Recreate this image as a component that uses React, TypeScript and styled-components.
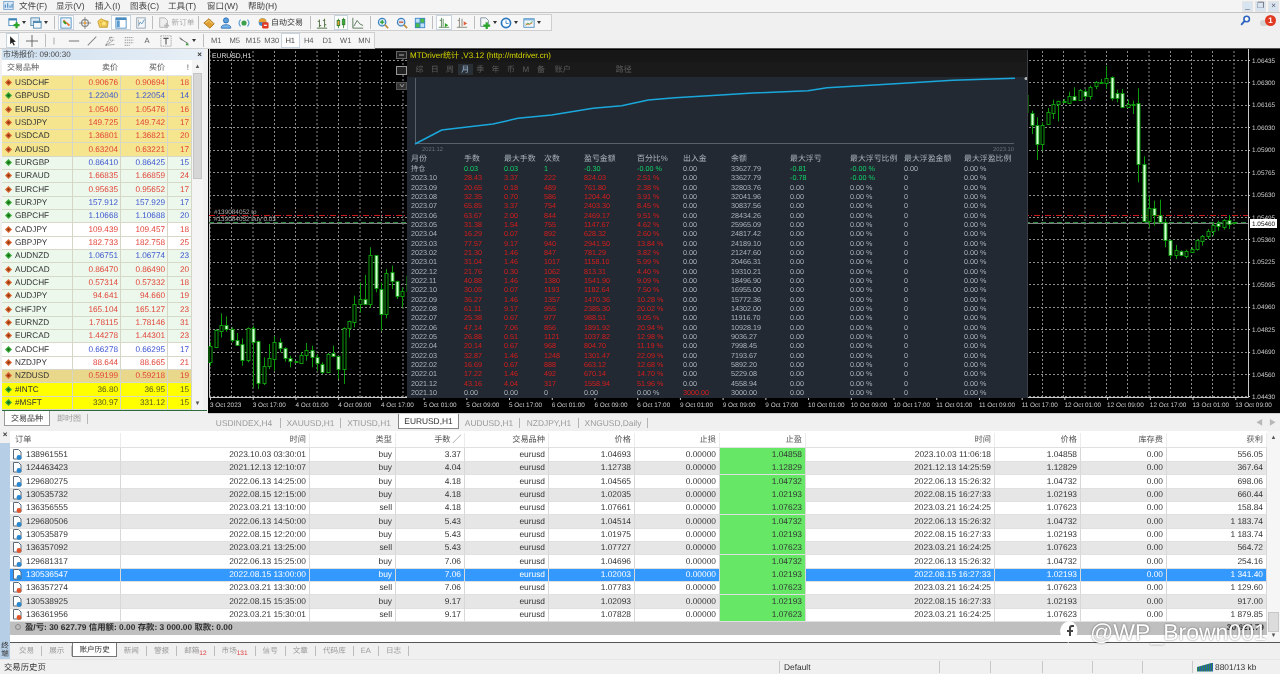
import React from "react";
import styled, { createGlobalStyle } from "styled-components";

const GlobalStyle = createGlobalStyle`
  html, body { margin: 0; padding: 0; background: #f0f0f0; }
  body {
    font-family: "Liberation Sans", "Noto Sans CJK SC", sans-serif;
    font-size: 8.4px;
    color: #2f2f2f;
    text-rendering: geometricPrecision;
  }
`;

const Frame = styled.div`
  position: relative;
  display: flex;
  flex-direction: column;
  width: 1280px;
  height: 674px;
  overflow: hidden;
  background: #f0f0f0;
  filter: blur(0.3px);
`;

/* ---------- menu + toolbars ---------- */

const MenuBar = styled.div`
  display: flex;
  align-items: center;
  height: 13px;
  box-sizing: border-box;
  border-bottom: 1px solid #c4c4c4;
  background: #f4f4f4;
  padding-left: 3px;
`;

const MenuItem = styled.span<{ $w: number }>`
  width: ${(p) => p.$w}px;
  font-size: 8.6px;
  color: #444;
`;

const WinButtons = styled.div`
  display: flex;
  margin-left: auto;
  gap: 2px;
  padding-right: 1px;
`;

const WinButton = styled.div`
  display: flex;
  align-items: center;
  justify-content: center;
  width: 11px;
  height: 11px;
  background: #d8e4f0;
  border: 1px solid #e4e4e4;
  box-sizing: border-box;
  color: #556;
  font-size: 8px;
  line-height: 1;
`;

const ToolArea = styled.div`
  position: relative;
  display: flex;
  flex-direction: column;
  height: 36px;
  box-sizing: border-box;
  border-bottom: 1px solid #505050;
`;

const ToolRow = styled.div<{ $w: number; $mt: number }>`
  display: flex;
  align-items: center;
  width: ${(p) => p.$w}px;
  height: 17px;
  margin-top: ${(p) => p.$mt}px;
  box-sizing: border-box;
  background: #f6f6f6;
  border: 1px solid #cfcfcf;
  border-left: 0;
  padding-left: 6px;
`;

const ToolBtn = styled.div<{ $w: number; $ml?: number; $on?: boolean }>`
  display: flex;
  align-items: center;
  justify-content: center;
  gap: 2px;
  flex: none;
  width: ${(p) => p.$w}px;
  height: 15px;
  margin-left: ${(p) => p.$ml ?? 0}px;
  box-sizing: border-box;
  font-size: 7.6px;
  color: ${(p) => (p.$on ? "#444" : "#5a5a5a")};
  background: ${(p) => (p.$on ? "#fff" : "transparent")};
  border: 1px solid ${(p) => (p.$on ? "#c8d4e0" : "transparent")};
`;

const GreyLabel = styled.span`
  color: #a9a9a9;
  font-size: 7.6px;
`;

const AutoLabel = styled.span`
  color: #333;
  font-size: 8px;
`;

const ToolSep = styled.div<{ $w: number }>`
  flex: none;
  width: ${(p) => p.$w}px;
  height: 13px;
  background: linear-gradient(#bdbdbd, #bdbdbd) center / 1px 100% no-repeat;
`;

const Caret = styled.span`
  width: 0;
  height: 0;
  border-left: 2px solid transparent;
  border-right: 2px solid transparent;
  border-top: 3px solid #333;
`;

const TopRight = styled.div`
  position: absolute;
  top: 0;
  right: 4px;
  height: 15px;
  display: flex;
  align-items: center;
`;

const Bubble = styled.span`
  width: 8px;
  height: 6px;
  margin: 5px -3px 0 9px;
  border-radius: 3px;
  background: #d4d4d4;
`;

const Badge = styled.span`
  position: relative;
  display: flex;
  align-items: center;
  justify-content: center;
  width: 11px;
  height: 11px;
  border-radius: 50%;
  background: #e23a22;
  color: #fff;
  font-size: 8px;
  font-weight: 700;
`;

type IconProps = { children: React.ReactNode; size?: number };
const Ico = ({ children, size = 12 }: IconProps) => (
  <svg width={size} height={size} viewBox="0 0 14 14">
    {children}
  </svg>
);

const icons: Record<string, React.ReactNode> = {
  newChart: (
    <>
      <rect x="1" y="2" width="9" height="8" fill="#fff" stroke="#3f86b8" />
      <rect x="1" y="2" width="9" height="2" fill="#3f86b8" />
      <path d="M10 6v7M6.5 9.5h7" stroke="#2aa52a" strokeWidth="2.6" />
    </>
  ),
  profile: (
    <>
      <rect x="1" y="1" width="10" height="9" fill="#dce8f2" stroke="#4d87b0" />
      <rect x="4" y="5" width="9" height="8" fill="#f4f8fb" stroke="#4d87b0" />
      <rect x="4" y="5" width="9" height="2" fill="#4d87b0" />
    </>
  ),
  market: (
    <>
      <rect x="1" y="1" width="12" height="12" fill="#eaf3fa" stroke="#4a8bbf" />
      <path d="M4 4l3 3-2 0M8 7l3 3" stroke="#e86a1c" strokeWidth="2" fill="none" />
      <path d="M4 5l3 3" stroke="#2aa52a" strokeWidth="2" />
    </>
  ),
  data: (
    <>
      <circle cx="7" cy="7" r="4" fill="none" stroke="#8a8a8a" strokeWidth="1.4" />
      <path d="M7 0v14M0 7h14" stroke="#777" />
      <circle cx="7" cy="7" r="1.4" fill="#f0a030" />
    </>
  ),
  nav: (
    <>
      <path d="M1 5l4-3 3 2 5 1-1 7H3z" fill="#f5cf5a" stroke="#c09a30" />
      <path d="M8 3l1.5 3 3 .3-2.2 2 .6 3L8 9.8 5.2 11.3l.6-3-2.2-2 3-.3z" fill="#ffe680" stroke="#c89a20" strokeWidth=".6" />
    </>
  ),
  term: (
    <>
      <rect x="1" y="1" width="12" height="12" fill="#fff" stroke="#4a8bbf" />
      <rect x="1" y="1" width="12" height="2.5" fill="#4a8bbf" />
      <rect x="2" y="4" width="3.5" height="8" fill="#5a9bd0" />
    </>
  ),
  tester: (
    <>
      <rect x="2" y="1" width="10" height="12" fill="#f4f6f8" stroke="#8fa0b0" />
      <path d="M4 10l2-4 2 2 3-5" stroke="#4a8bbf" fill="none" />
      <path d="M4 3v8" stroke="#b0b0b0" />
    </>
  ),
  order: (
    <>
      <path d="M2 1h6l3 3v8H2z" fill="#eee" stroke="#b0b0b0" />
      <path d="M10 7v6M7 10h6" stroke="#b8b8b8" strokeWidth="2" />
    </>
  ),
  editor: (
    <>
      <path d="M1 7l6-5 6 6-5 5z" fill="#e0a030" stroke="#a87018" />
      <path d="M3 7l4-3 4 4" stroke="#f6dc90" fill="none" />
    </>
  ),
  person: (
    <>
      <circle cx="7" cy="4" r="3" fill="#5aa0e0" stroke="#2a6ab0" />
      <path d="M1.5 12c0-4 11-4 11 0v1h-11z" fill="#7ab8ec" stroke="#2a6ab0" />
    </>
  ),
  globe: (
    <>
      <circle cx="7" cy="7" r="3" fill="#3aa04a" />
      <path d="M3 3a6 6 0 000 8M11 3a6 6 0 010 8" stroke="#5a9ad0" fill="none" strokeWidth="1.3" />
    </>
  ),
  auto: (
    <>
      <circle cx="6.5" cy="6" r="4.5" fill="#3c8ad0" />
      <path d="M2 6a4.5 4.5 0 019 0z" fill="#e8a030" />
      <rect x="6" y="6" width="7.5" height="7.5" rx="1.5" fill="#e03a22" />
      <rect x="8" y="9" width="3.5" height="1.4" fill="#fff" />
    </>
  ),
  bars: <path d="M4 3v9M2 5h2M4 10h2M10 2v10M8 4h2M10 9h2M1 13h12" stroke="#4f6f3f" strokeWidth="1.1" fill="none" />,
  candles: (
    <>
      <path d="M4 2v11M10 1v12" stroke="#2d7f2d" />
      <rect x="2.5" y="4" width="3" height="6" fill="#e8a030" stroke="#2d7f2d" />
      <rect x="8.5" y="3" width="3" height="6" fill="#38b038" stroke="#2d7f2d" />
    </>
  ),
  line: <path d="M1 1v12h12M2 11l4-7 3 4 4 2" stroke="#5a7a5a" strokeWidth="1.1" fill="none" />,
  zoomIn: (
    <>
      <circle cx="6" cy="6" r="4.3" fill="#d6eafa" stroke="#3a80c0" strokeWidth="1.4" />
      <path d="M9 9l4 4" stroke="#c09040" strokeWidth="2" />
      <path d="M6 3.5v5M3.5 6h5" stroke="#2a9a2a" strokeWidth="1.4" />
    </>
  ),
  zoomOut: (
    <>
      <circle cx="6" cy="6" r="4.3" fill="#d6eafa" stroke="#3a80c0" strokeWidth="1.4" />
      <path d="M9 9l4 4" stroke="#c09040" strokeWidth="2" />
      <path d="M3.5 6h5" stroke="#d04020" strokeWidth="1.4" />
    </>
  ),
  tile: (
    <>
      <rect x="1" y="1" width="12" height="12" fill="#3a86c8" />
      <rect x="2" y="2" width="4.5" height="4.5" fill="#bfe0f6" />
      <rect x="7.5" y="2" width="4.5" height="4.5" fill="#4aba4a" />
      <rect x="2" y="7.5" width="4.5" height="4.5" fill="#4aba4a" />
      <rect x="7.5" y="7.5" width="4.5" height="4.5" fill="#bfe0f6" />
    </>
  ),
  scroll: (
    <>
      <path d="M4 1v11M1 12h12M2 4h2M6 2v9" stroke="#4f7f4f" fill="none" />
      <path d="M8 7l4 2.5-4 2.5z" fill="#2aa52a" />
    </>
  ),
  shift: (
    <>
      <path d="M4 1v11M1 12h12M2 4h2M7 2v9" stroke="#7f7f6f" fill="none" />
      <path d="M9 5l4 2.5-4 2.5z" fill="#e0603a" />
    </>
  ),
  indicator: (
    <>
      <path d="M2 1h6l3 3v7H2z" fill="#f4f6f8" stroke="#7a8a9a" />
      <path d="M9 6v8M5 10h8" stroke="#2aa52a" strokeWidth="2.6" />
    </>
  ),
  clock: (
    <>
      <circle cx="7" cy="7" r="5.3" fill="#fff" stroke="#2a78c0" strokeWidth="2" />
      <path d="M7 4v3.5h3" stroke="#2a78c0" fill="none" />
    </>
  ),
  template: (
    <>
      <rect x="1" y="2" width="12" height="10" fill="#eef5fb" stroke="#4a8bbf" />
      <rect x="1" y="2" width="12" height="2" fill="#7fb2da" />
      <path d="M3 10l2.5-3 2 1.5L11 5" stroke="#3aa03a" fill="none" />
      <path d="M3 8l3 1 5-2" stroke="#d8803a" fill="none" />
    </>
  ),
  cursor: <path d="M4 1l0 10 2.5-2.2 2 4 1.5-.8-2-3.8 3.3-.2z" fill="#222" />,
  cross: <path d="M7 0v14M0 7h14" stroke="#555" />,
  vline: <path d="M7 1v12" stroke="#888" strokeWidth="1.2" />,
  hline: <path d="M1 7h12" stroke="#777" strokeWidth="1.2" />,
  trend: <path d="M2 12L12 2" stroke="#888" strokeWidth="1.2" />,
  fan: <path d="M2 12L8 2M2 12l8-5M2 12l10-1M6 3h5M7 6h5" stroke="#777" strokeDasharray="1.5 .7" fill="none" />,
  lines: <path d="M2 3h10M2 6h10M2 9h10M2 12h6" stroke="#888" strokeDasharray="1.5 .8" fill="none" />,
  labelBox: (
    <>
      <path d="M1 1h12M1 13h12M1 1v12M13 1v12" stroke="#999" strokeDasharray="1.5 1" fill="none" />
      <path d="M4 4h6M7 4v7" stroke="#555" strokeWidth="1.3" />
    </>
  ),
  arrows: (
    <>
      <path d="M1 3l5 3-2 0z" fill="#555" />
      <path d="M2 3l5 4M7 7l5 3" stroke="#666" />
      <path d="M10 9l3 3-4 0z" fill="#3a9a3a" />
    </>
  ),
  search: (
    <>
      <circle cx="8.5" cy="5" r="3.5" fill="#fff" stroke="#2a62c0" strokeWidth="2" />
      <path d="M6 7.5L1.5 12.5" stroke="#2a62c0" strokeWidth="2.4" />
    </>
  ),
  logo: (
    <>
      <rect x="1" y="2" width="12" height="10" fill="#d8e8f6" stroke="#6a9ac8" />
      <path d="M3 10V6M6 10V4M9 10V7M11.5 10V5" stroke="#4a86c0" strokeWidth="1.4" />
    </>
  ),
};

const I = ({ n, size }: { n: string; size?: number }) => <Ico size={size}>{icons[n]}</Ico>;

const Toolbars = () => (
  <ToolArea>
    <ToolRow $w={552} $mt={1}>
      <ToolBtn $w={21}><I n="newChart" /><Caret /></ToolBtn>
      <ToolBtn $w={24}><I n="profile" /><Caret /></ToolBtn>
      <ToolSep $w={7} />
      <ToolBtn $w={16} $on><I n="market" /></ToolBtn>
      <ToolBtn $w={21}><I n="data" /></ToolBtn>
      <ToolBtn $w={16}><I n="nav" /></ToolBtn>
      <ToolBtn $w={20} $on><I n="term" /></ToolBtn>
      <ToolBtn $w={19}><I n="tester" /></ToolBtn>
      <ToolSep $w={5} />
      <ToolBtn $w={42}><I n="order" /><GreyLabel>新订单</GreyLabel></ToolBtn>
      <ToolSep $w={3} />
      <ToolBtn $w={17}><I n="editor" /></ToolBtn>
      <ToolBtn $w={18}><I n="person" /></ToolBtn>
      <ToolBtn $w={18}><I n="globe" /></ToolBtn>
      <ToolBtn $w={54}><I n="auto" /><AutoLabel>自动交易</AutoLabel></ToolBtn>
      <ToolSep $w={6} />
      <ToolBtn $w={17}><I n="bars" /></ToolBtn>
      <ToolBtn $w={14} $ml={4} $on><I n="candles" /></ToolBtn>
      <ToolBtn $w={20}><I n="line" /></ToolBtn>
      <ToolSep $w={5} />
      <ToolBtn $w={20}><I n="zoomIn" /></ToolBtn>
      <ToolBtn $w={18}><I n="zoomOut" /></ToolBtn>
      <ToolBtn $w={17}><I n="tile" /></ToolBtn>
      <ToolSep $w={8} />
      <ToolBtn $w={16} $on><I n="scroll" /></ToolBtn>
      <ToolBtn $w={20}><I n="shift" /></ToolBtn>
      <ToolSep $w={5} />
      <ToolBtn $w={21}><I n="indicator" /><Caret /></ToolBtn>
      <ToolBtn $w={22}><I n="clock" /><Caret /></ToolBtn>
      <ToolBtn $w={24}><I n="template" /><Caret /></ToolBtn>
    </ToolRow>
    <ToolRow $w={375} $mt={1}>
      <ToolBtn $w={13} $on><I n="cursor" /></ToolBtn>
      <ToolBtn $w={20} $ml={3}><I n="cross" /></ToolBtn>
      <ToolSep $w={7} />
      <ToolBtn $w={10}><I n="vline" /></ToolBtn>
      <ToolBtn $w={20} $ml={5}><I n="hline" /></ToolBtn>
      <ToolBtn $w={16}><I n="trend" /></ToolBtn>
      <ToolBtn $w={20}><I n="fan" /></ToolBtn>
      <ToolBtn $w={17}><I n="lines" /></ToolBtn>
      <ToolBtn $w={20}>A</ToolBtn>
      <ToolBtn $w={17}><I n="labelBox" /></ToolBtn>
      <ToolBtn $w={26}><I n="arrows" /><Caret /></ToolBtn>
      <ToolSep $w={7} />
      {["M1", "M5", "M15", "M30", "H1", "H4", "D1", "W1", "MN"].map((t) => (
        <ToolBtn key={t} $w={18.5} $on={t === "H1"}>{t}</ToolBtn>
      ))}
    </ToolRow>
    <TopRight>
      <I n="search" size={11} />
      <Bubble />
      <Badge>1</Badge>
    </TopRight>
  </ToolArea>
);

/* ---------- market watch ---------- */

const Workspace = styled.div`
  display: flex;
  height: 382px;
  flex: none;
`;

const MarketPanel = styled.div`
  display: flex;
  flex-direction: column;
  width: 207px;
  flex: none;
  background: #f0f0f0;
`;

const PanelTitle = styled.div`
  display: flex;
  align-items: center;
  justify-content: space-between;
  height: 11px;
  margin: 0 3px 0 2px;
  padding: 0 2px 0 1px;
  background: linear-gradient(90deg, #cfe0f0, #e8eff6);
  font-size: 8px;
  color: #444;
`;

const Close = styled.span`
  font-size: 8px;
  font-weight: 700;
  color: #333;
`;

const MarketBody = styled.div`
  display: flex;
  flex: none;
  height: 350px;
  margin-left: 2px;
  border-bottom: 1px solid #2e6b3e;
`;

const MarketTable = styled.div`
  width: 190px;
  flex: none;
`;

const MarketColumns = "71px 48px 47px 24px";

const MarketHead = styled.div`
  display: grid;
  grid-template-columns: ${MarketColumns};
  height: 16px;
  background: #fff;
  align-items: center;
  color: #555;
  font-size: 8px;
  border-bottom: 1px solid #e4e4e4;
  box-sizing: border-box;
`;

const HeadName = styled.span`
  padding-left: 5px;
`;

const HeadNum = styled.span`
  text-align: right;
  padding-right: 3px;
`;

const bgs: Record<string, string> = {
  y: "#f4e58e",
  m: "#ecf8ec",
  w: "#ffffff",
  t: "#e9d78c",
  Y: "#ffff00",
};

const MarketRow = styled.div<{ $bg: string }>`
  display: grid;
  grid-template-columns: ${MarketColumns};
  height: 13.333px;
  align-items: stretch;
  background: ${(p) => bgs[p.$bg]};
  font-size: 8.2px;
  line-height: 13px;
`;

const SymbolCell = styled.span`
  display: flex;
  align-items: center;
  gap: 3px;
  padding-left: 3px;
  color: #333;
  border-right: 1px solid #d6d6c8;
  border-bottom: 1px solid #d8d8c8;
  box-sizing: border-box;
`;

const priceColors: Record<string, string> = { r: "#e2453a", b: "#3f57d0", k: "#5a5a20" };

const PriceCell = styled.span<{ $c: string }>`
  text-align: right;
  padding-right: 2px;
  color: ${(p) => priceColors[p.$c]};
  border-right: 1px solid #d6d6c8;
  border-bottom: 1px solid #d8d8c8;
  box-sizing: border-box;
`;

const VScroll = styled.div`
  display: flex;
  flex-direction: column;
  justify-content: space-between;
  align-items: center;
  width: 11px;
  flex: none;
  background: #f4f4f4;
  color: #555;
  font-size: 6px;
  padding: 4px 0 3px;
  box-sizing: border-box;
`;

const MarketThumb = styled.div`
  width: 9px;
  height: 106px;
  margin: 3px 0 auto;
  background: #d6d6d6;
  border: 1px solid #c4c4c4;
  box-sizing: border-box;
`;

const PanelTabs = styled.div`
  display: flex;
  align-items: center;
  height: 15px;
  margin-left: 4px;
  font-size: 8px;
  color: #9c9c9c;
`;

const ActivePanelTab = styled.div`
  display: flex;
  align-items: center;
  justify-content: center;
  width: 46px;
  height: 15px;
  background: #fff;
  color: #333;
  border: 1px solid #9a9a9a;
  border-top: 0;
  box-sizing: border-box;
`;

const PanelTab = styled.div`
  padding: 0 6px 0 7px;
  border-right: 1px solid #b8b8b8;
  line-height: 10px;
`;

const marketData: [string, string, string, string, "r" | "b" | "k", string][] = [
  ["USDCHF", "0.90676", "0.90694", "18", "r", "y"],
  ["GBPUSD", "1.22040", "1.22054", "14", "b", "y"],
  ["EURUSD", "1.05460", "1.05476", "16", "r", "y"],
  ["USDJPY", "149.725", "149.742", "17", "r", "y"],
  ["USDCAD", "1.36801", "1.36821", "20", "r", "y"],
  ["AUDUSD", "0.63204", "0.63221", "17", "r", "y"],
  ["EURGBP", "0.86410", "0.86425", "15", "b", "m"],
  ["EURAUD", "1.66835", "1.66859", "24", "r", "m"],
  ["EURCHF", "0.95635", "0.95652", "17", "r", "m"],
  ["EURJPY", "157.912", "157.929", "17", "b", "m"],
  ["GBPCHF", "1.10668", "1.10688", "20", "b", "m"],
  ["CADJPY", "109.439", "109.457", "18", "r", "w"],
  ["GBPJPY", "182.733", "182.758", "25", "r", "w"],
  ["AUDNZD", "1.06751", "1.06774", "23", "b", "m"],
  ["AUDCAD", "0.86470", "0.86490", "20", "r", "m"],
  ["AUDCHF", "0.57314", "0.57332", "18", "r", "m"],
  ["AUDJPY", "94.641", "94.660", "19", "r", "m"],
  ["CHFJPY", "165.104", "165.127", "23", "r", "m"],
  ["EURNZD", "1.78115", "1.78146", "31", "r", "m"],
  ["EURCAD", "1.44278", "1.44301", "23", "r", "m"],
  ["CADCHF", "0.66278", "0.66295", "17", "b", "w"],
  ["NZDJPY", "88.644", "88.665", "21", "r", "w"],
  ["NZDUSD", "0.59199", "0.59218", "19", "r", "t"],
  ["#INTC", "36.80", "36.95", "15", "k", "Y"],
  ["#MSFT", "330.97", "331.12", "15", "k", "Y"],
];

const Tick = ({ up }: { up: boolean }) => (
  <svg width="7" height="7" viewBox="0 0 7 7">
    <path d="M3.5 0L7 3.5 3.5 7 0 3.5z" fill={up ? "#3aa53a" : "#d8622e"} />
    <circle cx="3.5" cy="3.5" r="1.2" fill={up ? "#0f6a0f" : "#8a3410"} />
  </svg>
);

const MarketWatch = () => (
  <MarketPanel>
    <PanelTitle>
      <span>市场报价: 09:00:30</span>
      <Close>×</Close>
    </PanelTitle>
    <MarketBody>
      <MarketTable>
        <MarketHead>
          <HeadName>交易品种</HeadName>
          <HeadNum>卖价</HeadNum>
          <HeadNum>买价</HeadNum>
          <HeadNum>!</HeadNum>
        </MarketHead>
        {marketData.map(([s, bid, ask, sp, c, bg]) => (
          <MarketRow key={s} $bg={bg}>
            <SymbolCell>
              <Tick up={c !== "r"} />
              {s}
            </SymbolCell>
            <PriceCell $c={c}>{bid}</PriceCell>
            <PriceCell $c={c}>{ask}</PriceCell>
            <PriceCell $c={c}>{sp}</PriceCell>
          </MarketRow>
        ))}
      </MarketTable>
      <VScroll>
        <span>▲</span>
        <MarketThumb />
        <span>▼</span>
      </VScroll>
    </MarketBody>
    <PanelTabs>
      <ActivePanelTab>交易品种</ActivePanelTab>
      <PanelTab>即时图</PanelTab>
    </PanelTabs>
  </MarketPanel>
);

/* ---------- candlestick chart ---------- */

const ChartPane = styled.div`
  display: flex;
  flex-direction: column;
  flex: 1;
  min-width: 0;
  margin-left: 1px;
`;

const ChartCanvas = styled.div`
  position: relative;
  flex: none;
  width: 1072px;
  height: 364px;
  background: #000;
  svg { display: block; }
`;

type Candle = [number, number, number, number, number];

// wick top, body top, body bottom, wick bottom, filled (1 = down candle)
const leftCandles: Candle[] = [
  [430, 440, 488, 500, 0], [390, 393, 443, 445, 0], [343, 378, 395, 415, 0], [352, 378, 390, 398, 1],
  [385, 390, 422, 430, 1], [402, 422, 436, 440, 1], [418, 436, 484, 500, 1], [385, 388, 484, 490, 0],
  [380, 388, 430, 565, 1], [425, 427, 552, 570, 1], [475, 502, 552, 558, 0], [435, 478, 502, 510, 0],
  [412, 428, 478, 515, 0], [418, 430, 448, 460, 1], [445, 447, 478, 488, 1], [470, 478, 486, 505, 1],
  [486, 486, 490, 490, 0], [460, 467, 492, 495, 0], [432, 452, 468, 485, 0], [440, 452, 472, 505, 1],
  [465, 475, 494, 515, 1], [490, 494, 518, 525, 1], [462, 464, 518, 520, 0], [440, 463, 472, 475, 1],
  [470, 472, 510, 540, 1], [385, 388, 512, 555, 0], [365, 367, 388, 415, 0], [290, 315, 370, 385, 0],
  [250, 300, 315, 340, 0], [228, 300, 316, 318, 1], [145, 168, 316, 325, 0], [168, 168, 268, 280, 1],
  [250, 270, 344, 395, 1], [210, 222, 345, 358, 0], [200, 220, 246, 270, 1], [245, 246, 292, 300, 1],
  [265, 277, 293, 325, 0], [230, 232, 278, 280, 0],
];

const rightCandles: Candle[] = [
  [105, 108, 160, 165, 0], [155, 163, 198, 225, 1], [175, 198, 255, 303, 1], [190, 198, 255, 275, 0],
  [147, 160, 196, 198, 0], [122, 134, 162, 180, 0], [125, 127, 136, 187, 0], [120, 126, 130, 132, 0],
  [98, 110, 130, 132, 0], [85, 110, 122, 125, 1], [90, 92, 123, 125, 0], [90, 95, 110, 120, 1],
  [80, 83, 110, 122, 0], [66, 70, 83, 90, 0], [60, 68, 72, 72, 0], [20, 56, 70, 90, 0],
  [52, 54, 118, 125, 1], [92, 102, 118, 130, 1], [90, 102, 143, 145, 1], [122, 134, 143, 145, 0],
  [125, 134, 136, 165, 0], [88, 133, 315, 370, 1], [292, 315, 485, 490, 1], [410, 448, 486, 505, 0],
  [425, 448, 468, 500, 1], [422, 468, 490, 495, 1], [480, 490, 543, 565, 1], [542, 544, 588, 598, 1],
  [558, 574, 590, 600, 0], [574, 575, 588, 592, 1], [572, 575, 590, 598, 0], [565, 570, 578, 580, 0],
  [540, 544, 572, 575, 0], [528, 530, 544, 560, 0], [510, 516, 530, 540, 0], [490, 497, 516, 530, 0],
  [485, 493, 503, 515, 1], [480, 482, 502, 512, 0], [468, 482, 494, 510, 1], [489, 490, 492, 493, 0],
];

const xGrid = [210, 231.5, 253, 274.5, 295.5, 317, 338.5, 360, 381.5, 403, 1042.5, 1063.5, 1085, 1106.5, 1127.5, 1149, 1170.5, 1191.5, 1212.5, 1234];
const prices = ["1.06435", "1.06300", "1.06165", "1.06030", "1.05900", "1.05765", "1.05630", "1.05495", "1.05360", "1.05225", "1.05095", "1.04960", "1.04825", "1.04690", "1.04560", "1.04430"];
const times = [
  "3 Oct 2023", "3 Oct 17:00", "4 Oct 01:00", "4 Oct 09:00", "4 Oct 17:00", "5 Oct 01:00", "5 Oct 09:00", "5 Oct 17:00",
  "6 Oct 01:00", "6 Oct 09:00", "6 Oct 17:00", "9 Oct 01:00", "9 Oct 09:00", "9 Oct 17:00", "10 Oct 01:00", "10 Oct 09:00",
  "10 Oct 17:00", "11 Oct 01:00", "11 Oct 09:00", "11 Oct 17:00", "12 Oct 01:00", "12 Oct 09:00", "12 Oct 17:00", "13 Oct 01:00", "13 Oct 09:00",
];
const priceY = (i: number) => 61 + i * 22.43;

const CandleShape = ({ x, c, y }: { x: number; c: Candle; y: (v: number) => number }) => {
  const [wt, bt, bb, wb, down] = c;
  const rx = Math.round(x);
  return (
    <g>
      <path d={`M${rx + 0.5} ${y(wt)}V${y(wb)}`} stroke="#0a9a0a" />
      <rect
        x={rx - 1}
        y={Math.round(y(bt)) + 0.5}
        width={3}
        height={Math.max(1, Math.round(y(bb) - y(bt)))}
        fill={down ? "#d4ffd4" : "#000"}
        stroke="#0c9c0c"
      />
    </g>
  );
};

const chartFont = '"Liberation Sans", sans-serif';
const axisText = { fill: "#c9c9c9", fontSize: 6.4, fontFamily: chartFont };
const noteText = { fill: "#a8a8a8", fontSize: 6.4, fontFamily: chartFont };

const CandleChart = () => (
  <svg width={1072} height={364} viewBox="208 50 1072 364">
    {xGrid.map((x) => (
      <path key={x} d={`M${x} 52V398`} stroke="#8c8c8c" strokeDasharray="2 2" />
    ))}
    {prices.map((p, i) => (
      <path key={p} d={`M209 ${Math.round(priceY(i)) + 0.5}H1248`} stroke="#8c8c8c" strokeDasharray="2 2" />
    ))}
    <path d="M209.5 50V398.5H1248.5V50" stroke="#c8c8c8" fill="none" />
    {prices.map((p, i) => (
      <g key={p}>
        <path d={`M1248 ${Math.round(priceY(i)) + 0.5}h2`} stroke="#c8c8c8" />
        <text x={1252} y={priceY(i) + 2.5} {...axisText}>{p}</text>
      </g>
    ))}
    {times.map((t, i) => (
      <g key={t}>
        <path d={`M${210.5 + i * 42.72} 398v3`} stroke="#c8c8c8" />
        <text x={210 + i * 42.72} y={407.5} {...axisText}>{t}</text>
      </g>
    ))}
    <path d="M209 216.5H1248" stroke="#c81818" strokeDasharray="6 2 1 2" />
    <path d="M209 223.5H1248" stroke="#2e8a3e" strokeDasharray="5 3" />
    <path d="M209 224.5H1248" stroke="#808080" />
    <text x={214} y={215} {...noteText}>#139084052 tp</text>
    <text x={214} y={222} {...noteText}>#139084052 buy 0.03</text>
    {leftCandles.map((c, i) => (
      <CandleShape key={i} x={210.3 + i * 5.33} c={c} y={(v) => 200 + v / 3} />
    ))}
    {rightCandles.map((c, i) => (
      <CandleShape key={i} x={1026.3 + i * 5.33} c={c} y={(v) => 60 + v / 3} />
    ))}
    <rect x={1250} y={220} width={27} height={9} fill="#fff" />
    <text x={1252} y={227} fontSize={6.4} fill="#111" fontFamily={chartFont}>1.05460</text>
    <rect x={396.5} y={52.5} width={10} height={7} fill="#222" stroke="#666" />
    <path d="M399 56h5" stroke="#aaa" />
    <rect x={396.5} y={67.5} width={10} height={8} fill="#222" stroke="#999" />
    <rect x={396.5} y={83.5} width={10} height={7} fill="#333" stroke="#555" />
    <path d="M400 85l2 3 2-3" stroke="#999" fill="none" />
    <text x={212} y={59} fill="#e0e0e0" fontSize={6.8} fontFamily={chartFont}>EURUSD,H1</text>
  </svg>
);

/* ---------- stats panel drawn by the EA over the chart ---------- */

const StatsPanel = styled.div`
  position: absolute;
  left: 199px;
  top: 1px;
  width: 620px;
  height: 348px;
  display: flex;
  flex-direction: column;
  background: #222932;
  font-size: 7.2px;
  color: #a8b0b8;
  border-right: 1px solid #3a3f46;
`;

const StatsTitle = styled.div`
  height: 12px;
  line-height: 11px;
  background: #171717;
  color: #d4d400;
  font-size: 8px;
  padding-left: 3px;
`;

const StatsTabs = styled.div`
  display: flex;
  align-items: center;
  height: 15px;
  background: #1a1a1a;
  padding-left: 5px;
  font-size: 8px;
  color: #5c5c5c;
`;

const StatsTab = styled.span<{ $on?: boolean; $w: number; $ml?: number }>`
  width: ${(p) => p.$w}px;
  margin-left: ${(p) => p.$ml ?? 0}px;
  text-align: center;
  color: ${(p) => (p.$on ? "#9fb8d8" : "#5c5c5c")};
  background: ${(p) => (p.$on ? "#2a2f36" : "transparent")};
`;

const StatsPlot = styled.div`
  height: 77px;
  flex: none;
  svg { display: block; }
`;

const statCols = "53px 40px 40px 40px 53px 46px 48px 59px 60px 54px 60px 60px";

const StatsTable = styled.div`
  padding-left: 4px;
  flex: none;
`;

const StatsHeadRow = styled.div`
  display: grid;
  grid-template-columns: ${statCols};
  height: 10px;
  line-height: 10px;
  font-size: 7.9px;
  color: #a8b0b8;
  white-space: nowrap;
`;

const StatsRow = styled.div`
  display: grid;
  grid-template-columns: ${statCols};
  height: 9.333px;
  line-height: 9px;
  white-space: nowrap;
`;

const statColor: Record<string, string> = { g: "#12d068", r: "#d81c1c", n: "#aab2ba" };

const StatCell = styled.span<{ $c?: string }>`
  color: ${(p) => statColor[p.$c ?? "n"]};
`;

const statsData = [
  "2023.10 28.43 3.37 222 824.03 2.51 33627.79",
  "2023.09 20.65 0.18 489 761.80 2.38 32803.76",
  "2023.08 32.35 0.70 586 1204.40 3.91 32041.96",
  "2023.07 65.85 3.37 754 2403.30 8.45 30837.56",
  "2023.06 63.67 2.00 844 2469.17 9.51 28434.26",
  "2023.05 31.38 1.54 755 1147.67 4.62 25965.09",
  "2023.04 16.29 0.07 892 628.32 2.60 24817.42",
  "2023.03 77.57 9.17 940 2941.50 13.84 24189.10",
  "2023.02 21.30 1.46 847 781.29 3.82 21247.60",
  "2023.01 31.04 1.46 1017 1158.10 5.99 20466.31",
  "2022.12 21.76 0.30 1062 813.31 4.40 19310.21",
  "2022.11 40.88 1.46 1380 1541.90 9.09 18496.90",
  "2022.10 30.05 0.07 1193 1182.64 7.50 16955.00",
  "2022.09 36.27 1.46 1357 1470.36 10.28 15772.36",
  "2022.08 61.11 9.17 955 2385.30 20.02 14302.00",
  "2022.07 25.38 0.67 977 988.51 9.05 11916.70",
  "2022.06 47.14 7.06 856 1891.92 20.94 10928.19",
  "2022.05 26.88 0.51 1121 1037.82 12.98 9036.27",
  "2022.04 20.14 0.67 968 804.70 11.19 7998.45",
  "2022.03 32.87 1.46 1248 1301.47 22.09 7193.67",
  "2022.02 16.69 0.67 888 663.12 12.68 5892.20",
  "2022.01 17.22 1.46 492 670.14 14.70 5229.08",
  "2021.12 43.16 4.04 317 1558.94 51.96 4558.94",
].map((l) => l.split(" "));

const statHeads = ["月份", "手数", "最大手数", "次数", "盈亏金额", "百分比%", "出入金", "余额", "最大浮亏", "最大浮亏比例", "最大浮盈金额", "最大浮盈比例"];

const Stats = () => (
  <StatsPanel>
    <StatsTitle>MTDriver统计 ,V3.12 (http://mtdriver.cn)</StatsTitle>
    <StatsTabs>
      {["综", "日", "周", "月", "季", "年", "币", "M", "备"].map((t) => (
        <StatsTab key={t} $w={15.2} $on={t === "月"}>{t}</StatsTab>
      ))}
      <StatsTab $w={28}>账户</StatsTab>
      <StatsTab $w={28} $ml={33}>路径</StatsTab>
    </StatsTabs>
    <StatsPlot>
      <svg width={620} height={77} viewBox="407 78 620 77">
        <path d="M415.5 79V144.5H1014" stroke="#5a6068" fill="none" />
        <path
          d="M415 145L441.7 131 465 128.3 493 125 518 119.3 551.7 116 593 109.3 621.7 106.7 648.3 101 675 98.7 725 95.7 753 94 808 91.7 827 88.7 887 85.3 953 81.3 1015 79.3"
          stroke="#1aa8dc"
          strokeWidth="1.5"
          fill="none"
        />
        <circle cx={1026} cy={79.5} r={1.5} fill="#bbb" />
        <text x={422} y={151.5} fontSize={5.8} fill="#6a7078" fontFamily={chartFont}>2021.12</text>
        <text x={993} y={151.5} fontSize={5.8} fill="#6a7078" fontFamily={chartFont}>2023.10</text>
      </svg>
    </StatsPlot>
    <StatsTable>
      <StatsHeadRow>
        {statHeads.map((h) => (
          <span key={h}>{h}</span>
        ))}
      </StatsHeadRow>
      <StatsRow>
        <StatCell>持仓</StatCell>
        <StatCell $c="g">0.03</StatCell>
        <StatCell $c="g">0.03</StatCell>
        <StatCell $c="g">1</StatCell>
        <StatCell $c="g">-0.30</StatCell>
        <StatCell $c="g">-0.00 %</StatCell>
        <StatCell>0.00</StatCell>
        <StatCell>33627.79</StatCell>
        <StatCell $c="g">-0.81</StatCell>
        <StatCell $c="g">-0.00 %</StatCell>
        <StatCell>0.00</StatCell>
        <StatCell>0.00 %</StatCell>
      </StatsRow>
      {statsData.map((r, i) => (
        <StatsRow key={r[0]}>
          <StatCell>{r[0]}</StatCell>
          <StatCell $c="r">{r[1]}</StatCell>
          <StatCell $c="r">{r[2]}</StatCell>
          <StatCell $c="r">{r[3]}</StatCell>
          <StatCell $c="r">{r[4]}</StatCell>
          <StatCell $c="r">{r[5]} %</StatCell>
          <StatCell>0.00</StatCell>
          <StatCell>{r[6]}</StatCell>
          <StatCell $c={i === 0 ? "g" : "n"}>{i === 0 ? "-0.78" : "0.00"}</StatCell>
          <StatCell $c={i === 0 ? "g" : "n"}>{i === 0 ? "-0.00 %" : "0.00 %"}</StatCell>
          <StatCell>0</StatCell>
          <StatCell>0.00 %</StatCell>
        </StatsRow>
      ))}
      <StatsRow>
        <StatCell>2021.10</StatCell>
        <StatCell>0.00</StatCell>
        <StatCell>0.00</StatCell>
        <StatCell>0</StatCell>
        <StatCell>0.00</StatCell>
        <StatCell>0.00 %</StatCell>
        <StatCell $c="r">3000.00</StatCell>
        <StatCell>3000.00</StatCell>
        <StatCell>0.00</StatCell>
        <StatCell>0.00 %</StatCell>
        <StatCell>0</StatCell>
        <StatCell>0.00 %</StatCell>
      </StatsRow>
    </StatsTable>
  </StatsPanel>
);

/* ---------- chart tabs ---------- */

const ChartTabs = styled.div`
  display: flex;
  align-items: center;
  height: 18px;
  flex: none;
  border-top: 1px solid #cfcfcf;
  box-sizing: border-box;
  font-size: 8.4px;
  color: #9a9a9a;
`;

const ChartTab = styled.div<{ $w: number; $on?: boolean; $noSep?: boolean }>`
  flex: none;
  width: ${(p) => p.$w}px;
  height: ${(p) => (p.$on ? 15 : 10)}px;
  line-height: ${(p) => (p.$on ? 14 : 10)}px;
  text-align: center;
  box-sizing: border-box;
  color: ${(p) => (p.$on ? "#333" : "#9a9a9a")};
  background: ${(p) => (p.$on ? "#fff" : "transparent")};
  border-right: 1px solid ${(p) => (p.$noSep ? "transparent" : "#b4b4b4")};
  border-left: ${(p) => (p.$on ? "1px solid #888" : "0")};
  ${(p) => (p.$on ? "border-right-color: #888; border-bottom: 1px solid #888; margin-top: -2px;" : "")}
`;

const TabArrows = styled.div`
  display: flex;
  gap: 6px;
  margin-left: auto;
  padding-right: 4px;
  font-size: 7px;
  color: #b8b8b8;
`;

const chartTabs = [
  ["USDINDEX,H4", 73], ["XAUUSD,H1", 60], ["XTIUSD,H1", 57], ["EURUSD,H1", 61],
  ["AUDUSD,H1", 61], ["NZDJPY,H1", 59], ["XNGUSD,Daily", 69],
] as [string, number][];

const Charts = () => (
  <ChartPane>
    <ChartCanvas>
      <CandleChart />
      <Stats />
    </ChartCanvas>
    <ChartTabs>
      {chartTabs.map(([t, w]) => (
        <ChartTab key={t} $w={w} $on={t === "EURUSD,H1"} $noSep={t === "XTIUSD,H1"}>{t}</ChartTab>
      ))}
      <TabArrows>
        <span>◀</span>
        <span>▶</span>
      </TabArrows>
    </ChartTabs>
  </ChartPane>
);

/* ---------- terminal ---------- */

const Terminal = styled.div`
  display: flex;
  height: 228px;
  flex: none;
`;

const SideStrip = styled.div`
  display: flex;
  flex-direction: column;
  align-items: center;
  justify-content: space-between;
  width: 10px;
  flex: none;
  background: linear-gradient(#f0f0f0 12px, #b6cee6 12px);
  font-size: 7.5px;
  line-height: 7.5px;
  color: #333;
`;

const StripLabel = styled.span`
  width: 8px;
  padding-bottom: 2px;
  text-align: center;
`;

const TerminalMain = styled.div`
  display: flex;
  flex-direction: column;
  flex: 1;
  min-width: 0;
`;

const TableWrap = styled.div`
  display: flex;
  height: 212px;
  flex: none;
  background: #fff;
  border-bottom: 1px solid #555;
  box-sizing: border-box;
`;

const OrderTable = styled.div`
  width: 1257px;
  flex: none;
  margin-top: 1px;
`;

const orderCols = "111px 189px 86px 69px 84px 86px 85px 86px 189px 86px 86px 100px";

const OrderHead = styled.div`
  display: grid;
  grid-template-columns: ${orderCols};
  height: 15px;
  align-items: center;
  background: #fff;
  color: #555;
  font-size: 8.2px;
  border-bottom: 1px solid #e0e0e0;
`;

const OrderHeadCell = styled.span<{ $left?: boolean }>`
  text-align: ${(p) => (p.$left ? "left" : "right")};
  padding: 0 3px 0 ${(p) => (p.$left ? 5 : 0)}px;
  border-right: 1px solid #ececec;
  line-height: 14px;
`;

const OrderRow = styled.div<{ $alt: boolean; $sel: boolean }>`
  display: grid;
  grid-template-columns: ${orderCols};
  height: 13.333px;
  line-height: 13px;
  font-size: 8.4px;
  background: ${(p) => (p.$sel ? "#3399ff" : p.$alt ? "#e6e6e6" : "#fff")};
  color: ${(p) => (p.$sel ? "#fff" : "#333")};
`;

const OrderCell = styled.span`
  text-align: right;
  padding-right: 3px;
  border-right: 1px solid #d8d8d8;
  border-bottom: 1px solid #e0e0e0;
  box-sizing: border-box;
`;

const TicketCell = styled(OrderCell)`
  display: flex;
  align-items: center;
  gap: 4px;
  padding-left: 3px;
`;

const ProfitCell = styled(OrderCell)`
  background: #66e866;
  color: #333;
`;

const SummaryRow = styled.div`
  display: flex;
  justify-content: space-between;
  height: 14px;
  line-height: 13px;
  background: #bfbfbf;
  padding: 0 3px 0 5px;
  font-size: 8.4px;
  color: #2d2d2d;
  font-weight: 700;
`;

const SummaryLead = styled.span`
  display: inline-block;
  width: 4px;
  height: 4px;
  margin-right: 4px;
  border: 1px solid #888;
  border-radius: 50%;
`;

const TermScroll = styled(VScroll)`
  width: 13px;
  background: #f6f6f6;
`;

const TermThumb = styled.div`
  width: 11px;
  height: 20px;
  margin-top: auto;
  margin-bottom: 1px;
  background: #dcdcdc;
  border: 1px solid #c8c8c8;
  box-sizing: border-box;
`;

const TermTabs = styled.div`
  display: flex;
  align-items: center;
  height: 16px;
  flex: none;
  padding-left: 2px;
  font-size: 7.6px;
  color: #9a9a9a;
`;

const TermTab = styled.div<{ $on?: boolean }>`
  flex: none;
  padding: 0 ${(p) => (p.$on ? 6 : 7)}px;
  height: ${(p) => (p.$on ? 14 : 10)}px;
  line-height: ${(p) => (p.$on ? 13 : 10)}px;
  box-sizing: border-box;
  white-space: nowrap;
  color: ${(p) => (p.$on ? "#333" : "#9a9a9a")};
  background: ${(p) => (p.$on ? "#fff" : "transparent")};
  border-right: 1px solid ${(p) => (p.$on ? "#777" : "#bcbcbc")};
  border-left: ${(p) => (p.$on ? "1px solid #777" : "0")};
  border-bottom: ${(p) => (p.$on ? "1px solid #777" : "0")};
  margin-top: ${(p) => (p.$on ? -2 : 0)}px;
`;

const TabCount = styled.sub`
  color: #e04040;
  font-size: 6.5px;
  vertical-align: -2px;
  line-height: 0;
`;

const orders = [
  "138961551|2023.10.03 03:30:01|buy|3.37|1.04693|1.04858|2023.10.03 11:06:18|556.05",
  "124463423|2021.12.13 12:10:07|buy|4.04|1.12738|1.12829|2021.12.13 14:25:59|367.64",
  "129680275|2022.06.13 14:25:00|buy|4.18|1.04565|1.04732|2022.06.13 15:26:32|698.06",
  "130535732|2022.08.15 12:15:00|buy|4.18|1.02035|1.02193|2022.08.15 16:27:33|660.44",
  "136356555|2023.03.21 13:10:00|sell|4.18|1.07661|1.07623|2023.03.21 16:24:25|158.84",
  "129680506|2022.06.13 14:50:00|buy|5.43|1.04514|1.04732|2022.06.13 15:26:32|1 183.74",
  "130535879|2022.08.15 12:20:00|buy|5.43|1.01975|1.02193|2022.08.15 16:27:33|1 183.74",
  "136357092|2023.03.21 13:25:00|sell|5.43|1.07727|1.07623|2023.03.21 16:24:25|564.72",
  "129681317|2022.06.13 15:25:00|buy|7.06|1.04696|1.04732|2022.06.13 15:26:32|254.16",
  "130536547|2022.08.15 13:00:00|buy|7.06|1.02003|1.02193|2022.08.15 16:27:33|1 341.40",
  "136357274|2023.03.21 13:30:00|sell|7.06|1.07783|1.07623|2023.03.21 16:24:25|1 129.60",
  "130538925|2022.08.15 15:35:00|buy|9.17|1.02093|1.02193|2022.08.15 16:27:33|917.00",
  "136361956|2023.03.21 15:30:01|sell|9.17|1.07828|1.07623|2023.03.21 16:24:25|1 879.85",
].map((l) => l.split("|"));

const TicketIcon = ({ sell }: { sell: boolean }) => (
  <svg width="9" height="11" viewBox="0 0 9 11">
    <path d="M.5.5h5l2.5 2.5v7h-7.500z" fill="#fff" stroke="#5a6a7a" />
    <circle cx="6" cy="8.5" r="2.4" fill={sell ? "#e0562a" : "#2a88d0"} />
  </svg>
);

const heads = ["订单", "时间", "类型", "手数 ╱", "交易品种", "价格", "止损", "止盈", "时间", "价格", "库存费", "获利"];

const termTabLabels = ["交易", "展示", "账户历史", "新闻", "警报", "邮箱", "市场", "信号", "文章", "代码库", "EA", "日志"];

const TerminalBlock = () => (
  <Terminal>
    <SideStrip>
      <Close>×</Close>
      <StripLabel>终端</StripLabel>
    </SideStrip>
    <TerminalMain>
      <TableWrap>
        <OrderTable>
          <OrderHead>
            {heads.map((h, i) => (
              <OrderHeadCell key={i} $left={i === 0}>{h}</OrderHeadCell>
            ))}
          </OrderHead>
          {orders.map((o, i) => (
            <OrderRow key={o[0]} $alt={i % 2 === 1} $sel={i === 9}>
              <TicketCell>
                <TicketIcon sell={o[2] === "sell"} />
                {o[0]}
              </TicketCell>
              <OrderCell>{o[1]}</OrderCell>
              <OrderCell>{o[2]}</OrderCell>
              <OrderCell>{o[3]}</OrderCell>
              <OrderCell>eurusd</OrderCell>
              <OrderCell>{o[4]}</OrderCell>
              <OrderCell>0.00000</OrderCell>
              <ProfitCell>{o[5]}</ProfitCell>
              <OrderCell>{o[6]}</OrderCell>
              <OrderCell>{o[5]}</OrderCell>
              <OrderCell>0.00</OrderCell>
              <OrderCell>{o[7]}</OrderCell>
            </OrderRow>
          ))}
          <SummaryRow>
            <span>
              <SummaryLead />
              盈/亏: 30 627.79 信用额: 0.00 存款: 3 000.00 取款: 0.00
            </span>
            <span>30 627.79</span>
          </SummaryRow>
        </OrderTable>
        <TermScroll>
          <span>▲</span>
          <TermThumb />
          <span>▼</span>
        </TermScroll>
      </TableWrap>
      <TermTabs>
        {termTabLabels.map((t) => (
          <TermTab key={t} $on={t === "账户历史"}>
            {t}
            {t === "邮箱" && <TabCount>12</TabCount>}
            {t === "市场" && <TabCount>131</TabCount>}
          </TermTab>
        ))}
      </TermTabs>
    </TerminalMain>
  </Terminal>
);

/* ---------- status bar + watermark ---------- */

const StatusBar = styled.div`
  display: flex;
  align-items: center;
  height: 15px;
  flex: none;
  border-top: 1px solid #e6e6e6;
  box-sizing: border-box;
  font-size: 8.4px;
  color: #333;
`;

const StatusCell = styled.div<{ $w: number }>`
  display: flex;
  align-items: center;
  gap: 2px;
  flex: none;
  width: ${(p) => p.$w}px;
  height: 12px;
  padding-left: 4px;
  box-sizing: border-box;
  border-right: 1px solid #c8c8c8;
`;

const StatusLast = styled(StatusCell)`
  border-right: 0;
`;

const Traffic = styled.div`
  width: 16px;
  height: 9px;
  background: repeating-linear-gradient(90deg, #2a8a4a 0 1px, #2a5ab0 1px 2px);
  clip-path: polygon(0 50%, 100% 0, 100% 100%, 0 100%);
`;

const Watermark = styled.div`
  position: absolute;
  left: 1059px;
  top: 619px;
  display: flex;
  align-items: center;
  gap: 9px;
  font-size: 23px;
  line-height: 26px;
  color: #fff;
  text-shadow: 0 0 2px rgba(0, 0, 0, 0.55);
  pointer-events: none;
  white-space: nowrap;
`;

const App = () => (
  <Frame>
    <GlobalStyle />
    <MenuBar>
      <MenuItem $w={16}><I n="logo" size={11} /></MenuItem>
      <MenuItem $w={37}>文件(F)</MenuItem>
      <MenuItem $w={39}>显示(V)</MenuItem>
      <MenuItem $w={35}>插入(I)</MenuItem>
      <MenuItem $w={38}>图表(C)</MenuItem>
      <MenuItem $w={39}>工具(T)</MenuItem>
      <MenuItem $w={41}>窗口(W)</MenuItem>
      <MenuItem $w={40}>帮助(H)</MenuItem>
      <WinButtons>
        <WinButton>_</WinButton>
        <WinButton>❐</WinButton>
        <WinButton>×</WinButton>
      </WinButtons>
    </MenuBar>
    <Toolbars />
    <Workspace>
      <MarketWatch />
      <Charts />
    </Workspace>
    <TerminalBlock />
    <StatusBar>
      <StatusCell $w={780}>交易历史页</StatusCell>
      <StatusCell $w={160}>Default</StatusCell>
      <StatusCell $w={51} />
      <StatusCell $w={52} />
      <StatusCell $w={50} />
      <StatusCell $w={50} />
      <StatusCell $w={50} />
      <StatusLast $w={87}>
        <Traffic />
        8801/13 kb
      </StatusLast>
    </StatusBar>
    <Watermark>
      <svg width="22" height="24" viewBox="0 0 22 24">
        <path d="M11 1a10 10 0 00-3 19.500L9 23l3-3a10 10 0 00-1-19z" fill="#fff" />
        <path d="M15 6h-2a2 2 0 00-2 2v8M8 11h6" stroke="#444" strokeWidth="2" fill="none" />
      </svg>
      <span>@WP_Brown001</span>
    </Watermark>
  </Frame>
);

export default App;
